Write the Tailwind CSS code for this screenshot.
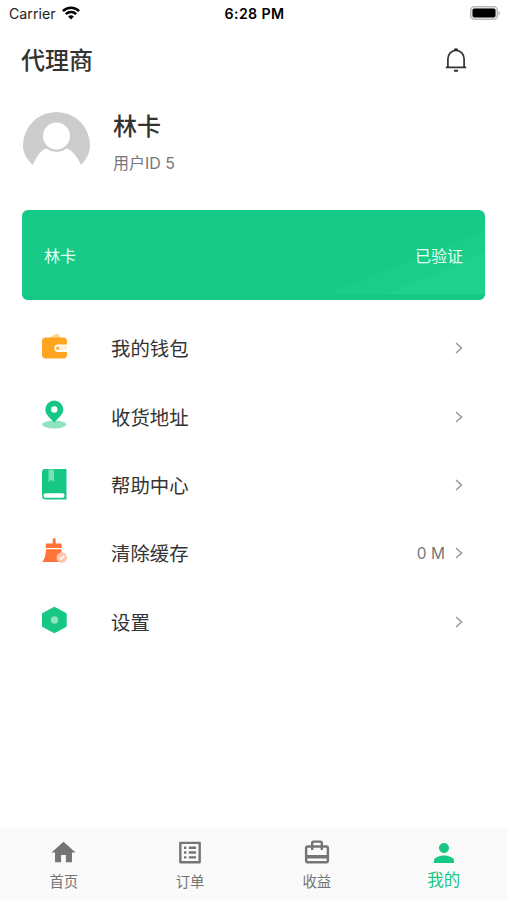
<!DOCTYPE html>
<html lang="zh-CN">

<head>
  <meta charset="UTF-8">
  <meta name="viewport" content="width=device-width, initial-scale=1.0">
  <title>代理商</title>
  <script src="https://cdn.jsdelivr.net/npm/@tailwindcss/browser@4"></script>
</head>

<body class="h-[900px] w-[507px] bg-white font-['Inter','Noto_Sans_CJK_SC',sans-serif] text-[#333] flex flex-col overflow-hidden">
  <!-- Status bar -->
  <div class="h-7 shrink-0 grid grid-cols-3 items-center pl-[9px] pr-[7px] text-black">
    <div class="flex items-center gap-[6px]">
      <span class="text-[14.2px] leading-none text-[#222]">Carrier</span>
      <svg class="w-[18px] h-[14px] -mt-[2px]" viewBox="0 0 18 14" fill="none" stroke="#000" stroke-width="2.5">
        <path d="M.9 5.1a11.6 11.6 0 0 1 16.2 0M3.8 8.2a7.4 7.4 0 0 1 10.4 0" />
        <path d="M9 13.6l-2.900-3a4.100 4.100 0 0 1 5.800 0z" fill="#000" stroke="none" />
      </svg>
    </div>
    <span class="text-center text-[14.2px] leading-none font-semibold whitespace-nowrap tracking-[0.35px]">6:28 PM</span>
    <svg class="w-[31px] h-4 justify-self-end -mt-[2px]" viewBox="0 0 31 16">
      <rect x="1.500" y="1.500" width="27" height="13" rx="4" fill="#ddd" stroke="#b8b8b8" stroke-width="1.200" />
      <rect x="3.500" y="3.600" width="23" height="9" rx="2" fill="#000" />
      <path d="M29.500 6v4.400c2-.8 2-3.600 0-4.400z" fill="#b8b8b8" />
    </svg>
  </div>

  <!-- Title -->
  <header class="h-16 shrink-0 flex items-center justify-between pl-[21px] pr-[38px]">
    <h1 class="pt-[2px] text-[24px] leading-none font-medium">代理商</h1>
    <svg class="w-[26px] h-[26px]" viewBox="0 0 26 26" fill="none" stroke="#333" stroke-width="1.700">
      <path d="M4.900 20V12a8.100 8.600 0 0 1 16.200 0v8M2.800 20.300h20.400" />
      <path d="M11.300 3q1.700-1.500 3.400 0M11 23.700h4" stroke-width="2" />
    </svg>
  </header>

  <!-- User -->
  <section class="h-[118px] shrink-0 flex pl-[23px] pt-5">
    <svg class="w-[67px] h-[54px]" viewBox="0 0 67 54">
      <path d="M10 53C3 47 0 40 0 33.500a33.500 33.500 0 0 1 67 0C67 40 64.500 46 58 53C54.500 45 50 39 44 36.500Q33.500 43.500 23 36.500C17 39 13 45 10 53z" fill="#ccc" />
      <circle cx="33.500" cy="24" r="13.500" fill="#fff" />
    </svg>
    <div class="ml-[23px] pt-px">
      <h2 class="text-[24px] leading-[27px] font-medium">林卡</h2>
      <p class="mt-[13px] text-[16px] leading-5 text-[#777]">用户ID 5</p>
    </div>
  </section>

  <!-- Card -->
  <section class="relative mx-[22px] h-[90px] shrink-0 rounded-[6px] bg-[#17ca87] overflow-hidden">
    <svg class="absolute inset-0 w-full h-full" viewBox="0 0 463 90" preserveAspectRatio="none">
      <path d="M304 85L463 20V85z" fill="#1acd8a" />
      <path d="M362 85L463 42V85z" fill="#1fd18e" />
      <path d="M0 84h463v6H0z" fill="#14c683" opacity=".6" />
    </svg>
    <div class="relative h-full flex items-center justify-between px-[22px] pt-px text-[16px] text-[#e4fff3]">
      <span>林卡</span>
      <span>已验证</span>
    </div>
  </section>

  <!-- Menu -->
  <nav class="pt-[14px] flex-1 text-[19.400px]">
    <a class="h-[68.400px] flex items-center pl-[40px] pr-[42px]">
      <svg class="w-7 h-9" viewBox="0 0 28 36">
        <path d="M9 8l7-4q2-1 3 1l2 3z" fill="#ffd18c" />
        <rect x="2" y="7.600" width="25" height="21" rx="4" fill="#ffa51f" />
        <path d="M28 14.500H18a3.700 3.700 0 0 0 0 7.400h10z" fill="#fff" />
        <path d="M27 15.800h-8.500a2.300 2.300 0 0 0 0 4.700H27z" fill="#fff0d8" />
        <circle cx="17.700" cy="18.200" r="1.500" fill="#ffa51f" />
      </svg>
      <span class="ml-[43px] pt-[3px]">我的钱包</span>
      <svg class="ml-auto w-[12px] h-4" viewBox="0 0 12 16" fill="none" stroke="#999" stroke-width="1.500"><path d="M3 3l5.500 5L3 13" /></svg>
    </a>
    <a class="h-[68.400px] flex items-center pl-[40px] pr-[42px]">
      <svg class="w-7 h-9" viewBox="0 0 28 36">
        <ellipse cx="14.300" cy="25.500" rx="12" ry="4" fill="#8ee3c0" />
        <path d="M14.200 23.500C9 18 5.300 15.500 5.300 10.500a9 9 0 0 1 18 0c0 5-4 7.500-9.100 13z" fill="#17c784" />
        <circle cx="14.300" cy="10.500" r="3.200" fill="#fff" />
      </svg>
      <span class="ml-[43px] pt-[3px]">收货地址</span>
      <svg class="ml-auto w-[12px] h-4" viewBox="0 0 12 16" fill="none" stroke="#999" stroke-width="1.500"><path d="M3 3l5.500 5L3 13" /></svg>
    </a>
    <a class="h-[68.400px] flex items-center pl-[40px] pr-[42px]">
      <svg class="w-7 h-9" viewBox="0 0 28 36">
        <path d="M5 2h21.500v30.500H5.500q-3.500 0-3.500-4V5q0-3 3-3z" fill="#17c784" />
        <path d="M8.500 2.500h5.500V15l-2.700-2.300L8.500 15z" fill="#79dfb5" />
        <rect x="3.500" y="26.300" width="21" height="4.500" rx="2" fill="#fff" />
      </svg>
      <span class="ml-[43px] pt-[3px]">帮助中心</span>
      <svg class="ml-auto w-[12px] h-4" viewBox="0 0 12 16" fill="none" stroke="#999" stroke-width="1.500"><path d="M3 3l5.500 5L3 13" /></svg>
    </a>
    <a class="h-[68.400px] flex items-center pl-[40px] pr-[42px]">
      <svg class="w-7 h-9" viewBox="0 0 28 36">
        <path d="M12.700 4.500q0-1.500 1.500-1.500t1.500 1.500v4h5q1 0 1 1V13H5.700V9.500q0-1 1-1h6z" fill="#ff7338" />
        <path d="M6 14.300h15.300L23 27H2.200q3.500-4 3.800-12.700z" fill="#ff7338" />
        <circle cx="21.700" cy="22.500" r="5.200" fill="#ffc5aa" />
        <path d="M19.500 22.700l1.700 1.600 3.200-3.600" fill="none" stroke="#fff" stroke-width="1.300" />
      </svg>
      <span class="ml-[43px] pt-[3px]">清除缓存</span>
      <span class="ml-auto mr-[8px] pt-px text-[15.500px] text-[#777]">0 M</span>
      <svg class="w-[12px] h-4" viewBox="0 0 12 16" fill="none" stroke="#999" stroke-width="1.500"><path d="M3 3l5.500 5L3 13" /></svg>
    </a>
    <a class="h-[68.400px] flex items-center pl-[40px] pr-[42px]">
      <svg class="w-7 h-9" viewBox="0 0 28 36">
        <path d="M14.300 4L25.500 10V22L14.300 28L3.200 22V10z" fill="#17c784" stroke="#17c784" stroke-width="2.400" stroke-linejoin="round" />
        <circle cx="14.500" cy="16" r="3.700" fill="#8ee3c0" />
      </svg>
      <span class="ml-[43px] pt-[3px]">设置</span>
      <svg class="ml-auto w-[12px] h-4" viewBox="0 0 12 16" fill="none" stroke="#999" stroke-width="1.500"><path d="M3 3l5.500 5L3 13" /></svg>
    </a>
  </nav>

  <!-- Bottom tabs -->
  <footer class="h-[72px] shrink-0 bg-[#fafafa] grid grid-cols-4 text-[14.400px] leading-5 text-[#757575]">
    <div class="flex flex-col items-center pt-[10px] pl-px">
      <svg class="w-[29px] h-[29px]" viewBox="0 0 24 24" fill="currentColor"><path d="M10 20v-6h4v6h5v-8h3L12 3 2 12h3v8z" /></svg>
      <span class="mt-[5px]">首页</span>
    </div>
    <div class="flex flex-col items-center pt-[10px]">
      <svg class="w-[30px] h-[29px]" viewBox="0 0 24 24" fill="currentColor"><path d="M19 5v14H5V5h14m1.100-2H3.900c-.5 0-.9.400-.9.900v16.200c0 .4.400.9.900.9h16.200c.4 0 .9-.5.9-.9V3.900c0-.5-.5-.9-.9-.9zM11 7h6v2h-6V7zm0 4h6v2h-6v-2zm0 4h6v2h-6v-2zM7 7h2v2H7V7zm0 4h2v2H7v-2zm0 4h2v2H7v-2z" /></svg>
      <span class="mt-[5px]">订单</span>
    </div>
    <div class="flex flex-col items-center pt-[10px]">
      <svg class="w-[30px] h-[29px]" viewBox="0 0 24 24" fill="currentColor"><path d="M20 6h-3V4c0-1.110-.89-2-2-2H9c-1.110 0-2 .89-2 2v2H4c-1.110 0-2 .89-2 2v11c0 1.110.89 2 2 2h16c1.110 0 2-.89 2-2V8c0-1.110-.89-2-2-2zM9 4h6v2H9V4zm11 15H4v-2h16v2zm0-5H4V8h3v2h2V8h6v2h2V8h3v6z" /></svg>
      <span class="mt-[5px]">收益</span>
    </div>
    <div class="flex flex-col items-center pt-[10px] text-[#17c784]">
      <svg class="w-[30px] h-[30px]" viewBox="0 0 24 24" fill="currentColor"><path d="M12 12c2.210 0 4-1.790 4-4s-1.790-4-4-4-4 1.790-4 4 1.790 4 4 4zm0 2c-2.670 0-8 1.340-8 4v2h16v-2c0-2.660-5.330-4-8-4z" /></svg>
      <span class="mt-[2px] text-[16.500px]">我的</span>
    </div>
  </footer>
</body>

</html>
